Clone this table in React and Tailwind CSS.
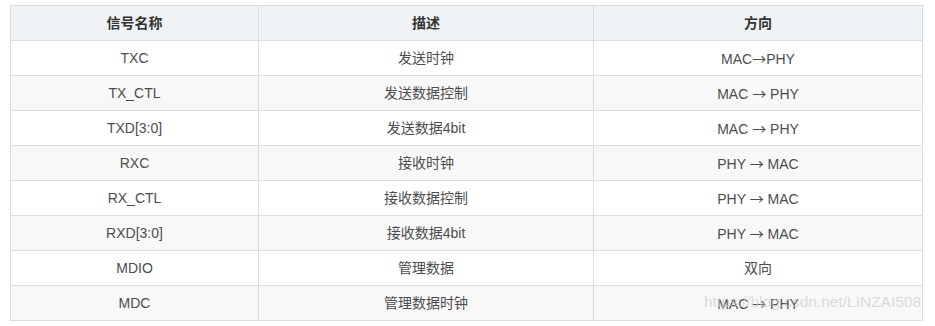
const rows = [
  ["TXC", "发送时钟", "MAC→PHY"],
  ["TX_CTL", "发送数据控制", "MAC → PHY"],
  ["TXD[3:0]", "发送数据4bit", "MAC → PHY"],
  ["RXC", "接收时钟", "PHY → MAC"],
  ["RX_CTL", "接收数据控制", "PHY → MAC"],
  ["RXD[3:0]", "接收数据4bit", "PHY → MAC"],
  ["MDIO", "管理数据", "双向"],
  ["MDC", "管理数据时钟", "MAC → PHY"],
];

const font = { fontFamily: '"Liberation Sans", Arial, "Noto Sans CJK SC", sans-serif' };

// arrow gets the wide CJK glyph, as in the original page
function Cell({ text }) {
  if (!text.includes("→")) return text;
  const [a, b] = text.split("→");
  return (
    <>
      {a}
      <span className="font-['Noto_Sans_CJK_SC',sans-serif]">→</span>
      {b}
    </>
  );
}

export default function App() {
  return (
    <div className="relative h-[326px] w-[935px] bg-white pl-[10px] pt-[5px]" style={font}>
      <table className="w-[913px] table-fixed border-collapse text-[14px] text-[#4d4d4d]">
        <colgroup>
          <col className="w-[248px]" />
          <col className="w-[335px]" />
          <col />
        </colgroup>
        <thead>
          <tr className="h-[35px] bg-[#eff3f5]">
            <th className="border border-[#dddddd] font-bold text-[#333333]">信号名称</th>
            <th className="border border-[#dddddd] font-bold text-[#333333]">描述</th>
            <th className="border border-[#dddddd] font-bold text-[#333333]">方向</th>
          </tr>
        </thead>
        <tbody>
          {rows.map((r, i) => (
            <tr key={i} className={i % 2 ? "h-[35px] bg-[#f8f8f8]" : "h-[35px] bg-white"}>
              {r.map((c, j) => (
                <td key={j} className="border border-[#dddddd] p-0 text-center leading-[20px]">
                  <Cell text={c} />
                </td>
              ))}
            </tr>
          ))}
        </tbody>
      </table>
      <div className="pointer-events-none absolute left-[704px] top-[294px] text-[15.5px] leading-none text-[#cccccc]/70">
        https://blog.csdn.net/LINZAI508
      </div>
    </div>
  );
}
